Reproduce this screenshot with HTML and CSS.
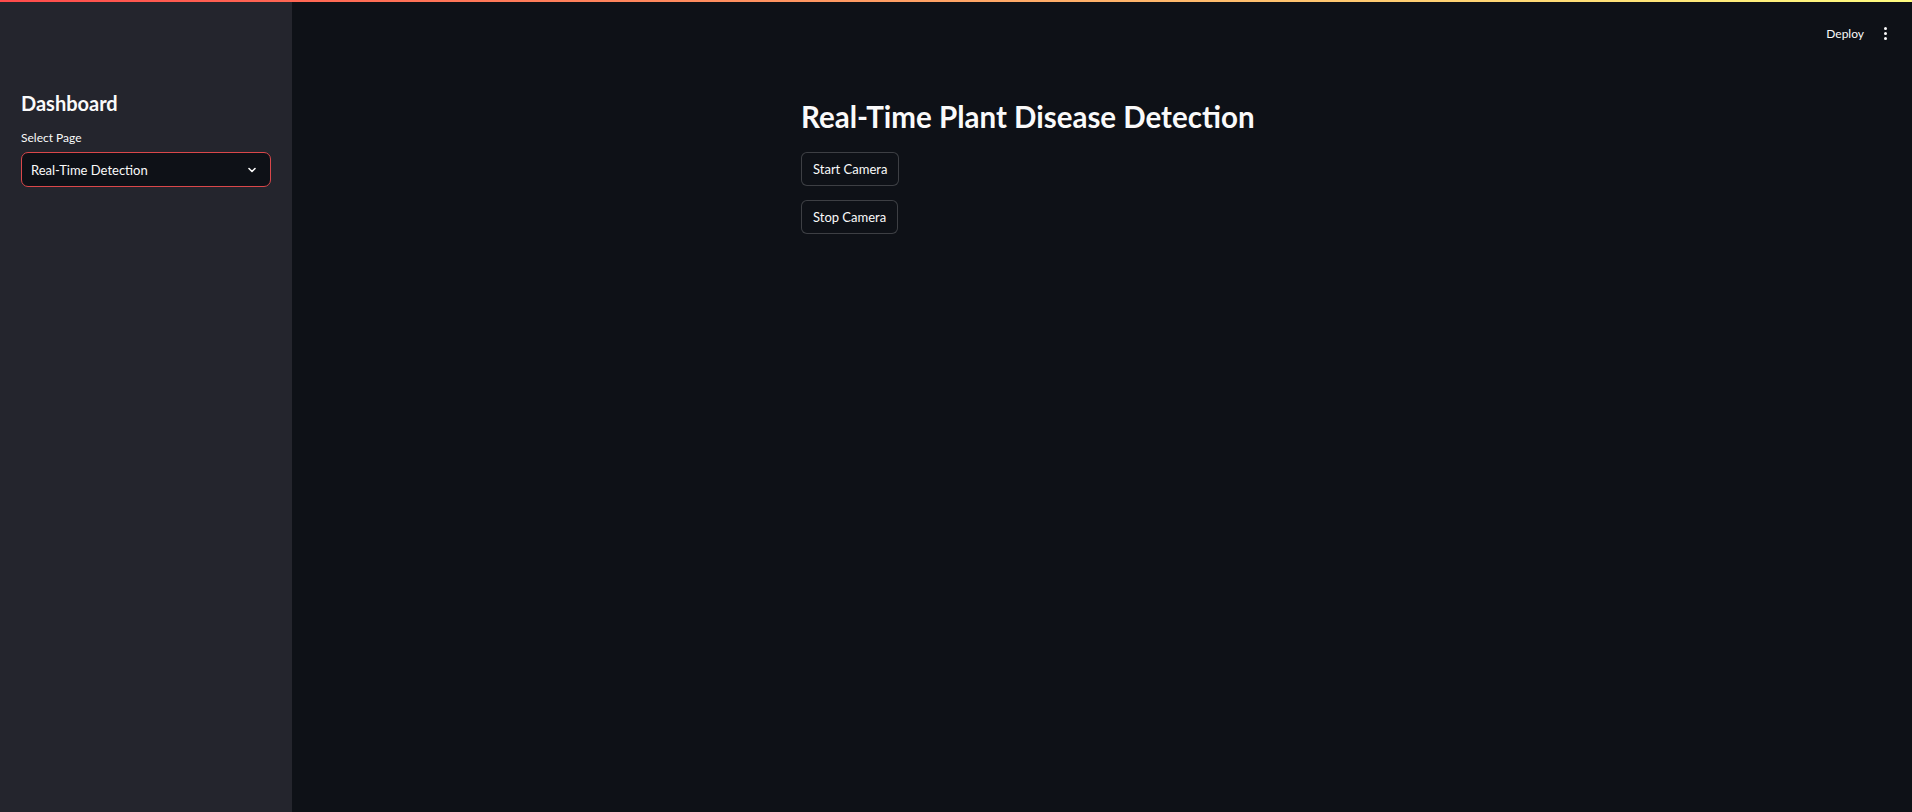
FILE: index.html
```html
<!DOCTYPE html>
<html lang="en">
<head>
<meta charset="utf-8">
<title>Plant Disease Detection</title>
<link rel="stylesheet" href="styles.css">
</head>
<body>
<div class="decoration"></div>
<div class="app">
  <aside class="sidebar">
    <h2 class="side-title">Dashboard</h2>
    <label class="field-label">Select Page</label>
    <div class="select">
      <span class="select-value">Real-Time Detection</span>
      <svg class="chevron" width="10" height="10" viewBox="0 0 10 10"><path d="M2 3.5 L5 6.5 L8 3.5" fill="none" stroke="#fafafa" stroke-width="1.6" stroke-linecap="round" stroke-linejoin="round"/></svg>
    </div>
  </aside>
  <main class="main">
    <header class="toolbar">
      <span class="deploy">Deploy</span>
      <span class="kebab"><i></i><i></i><i></i></span>
    </header>
    <section class="content">
      <h1 class="title">Real-Time Plant Disease Detection</h1>
      <button class="btn">Start Camera</button>
      <button class="btn">Stop Camera</button>
    </section>
  </main>
</div>
</body>
</html>
```
FILE: styles.css
```css
html, body {
  margin: 0;
  padding: 0;
  height: 100%;
  background: #0e1117;
  color: #fafafa;
  font-family: "Lato", "Noto Sans", sans-serif;
}
.decoration {
  height: 2px;
  background: linear-gradient(90deg, #ff4b4b, #fffd80);
}
.app {
  display: flex;
  height: calc(100% - 2px);
}
.sidebar {
  width: 292px;
  flex: none;
  background: #24252d;
  padding: 0 21px;
  box-sizing: border-box;
  display: flex;
  flex-direction: column;
}
.side-title {
  margin: 88px 0 0;
  font-size: 20px;
  line-height: 26px;
  font-weight: 700;
  color: #fafafa;
}
.field-label {
  margin-top: 14px;
  font-size: 12px;
  line-height: 15px;
  color: #fafafa;
}
.select {
  margin-top: 7px;
  width: 250px;
  height: 35px;
  box-sizing: border-box;
  border: 1px solid #d9474a;
  border-radius: 7px;
  background: #0e1117;
  display: flex;
  align-items: center;
  justify-content: space-between;
  padding: 0 13px 0 9px;
}
.select-value {
  font-size: 13px;
}
.chevron {
  display: block;
}
.main {
  flex: 1;
  display: flex;
  flex-direction: column;
}
.toolbar {
  height: 62px;
  display: flex;
  align-items: center;
  justify-content: flex-end;
  padding: 0 24px 0 0;
  gap: 20px;
  box-sizing: border-box;
}
.deploy {
  font-size: 12px;
  color: #fafafa;
}
.kebab {
  display: flex;
  flex-direction: column;
  gap: 2px;
  width: 4px;
}
.kebab i {
  display: block;
  width: 3px;
  height: 3px;
  border-radius: 50%;
  background: #fafafa;
}
.content {
  width: 602px;
  margin: 0 auto;
  display: flex;
  flex-direction: column;
  align-items: flex-start;
}
.title {
  margin: 33px 0 0;
  font-size: 29.5px;
  line-height: 40px;
  font-weight: 700;
  color: #fafafa;
}
.btn {
  margin-top: 15px;
  height: 34px;
  padding: 0 11px;
  border: 1px solid rgba(250, 250, 250, 0.2);
  border-radius: 6px;
  background: #0e1117;
  color: #fafafa;
  font-family: inherit;
  font-size: 13px;
}
.btn + .btn {
  margin-top: 14px;
}
```
